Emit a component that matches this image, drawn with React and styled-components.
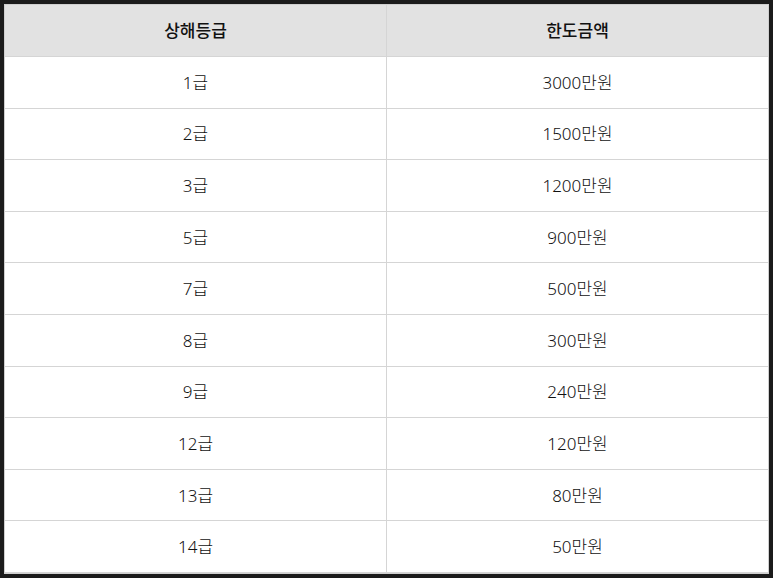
import React from 'react';
import styled, {createGlobalStyle} from 'styled-components';

const GlobalStyle = createGlobalStyle`
    html, body {
        margin: 0;
        padding: 0;
        background: #1b1b1b;
    }
    body {
        font-family: "Noto Sans", "Noto Sans CJK KR", sans-serif;
        color: #222;
    }
`;

const Frame = styled.div`
    width: 773px;
    height: 578px;
    box-sizing: border-box;
    padding: 4px 4px 4px 4px;
`;

const Table = styled.div`
    display: grid;
    grid-template-columns: 382px 1fr;
    grid-template-rows: 52px repeat(10, 1fr);
    height: 570px;
    box-sizing: border-box;
    border: 1px solid #cfcfcf;
    background: #fff;
`;

const Cell = styled.div`
    display: flex;
    align-items: center;
    justify-content: center;
    padding-bottom: 2px;
    font-size: 17px;
    font-weight: ${p => (p.head ? 500 : 300)};
    background: ${p => (p.head ? '#e2e2e2' : '#fff')};
    border-bottom: 1px solid #d5d5d5;
    border-right: ${p => (p.first ? '1px solid #d5d5d5' : 'none')};
    color: #111;
`;

const rows = [
    ['1급', '3000만원'],
    ['2급', '1500만원'],
    ['3급', '1200만원'],
    ['5급', '900만원'],
    ['7급', '500만원'],
    ['8급', '300만원'],
    ['9급', '240만원'],
    ['12급', '120만원'],
    ['13급', '80만원'],
    ['14급', '50만원'],
];

const App = () => {
    return (
        <Frame>
            <GlobalStyle />
            <Table>
                <Cell head first>상해등급</Cell>
                <Cell head>한도금액</Cell>
                {rows.map(([grade, limit]) => (
                    <React.Fragment key={grade}>
                        <Cell first>{grade}</Cell>
                        <Cell>{limit}</Cell>
                    </React.Fragment>
                ))}
            </Table>
        </Frame>
    );
};

export default App;
